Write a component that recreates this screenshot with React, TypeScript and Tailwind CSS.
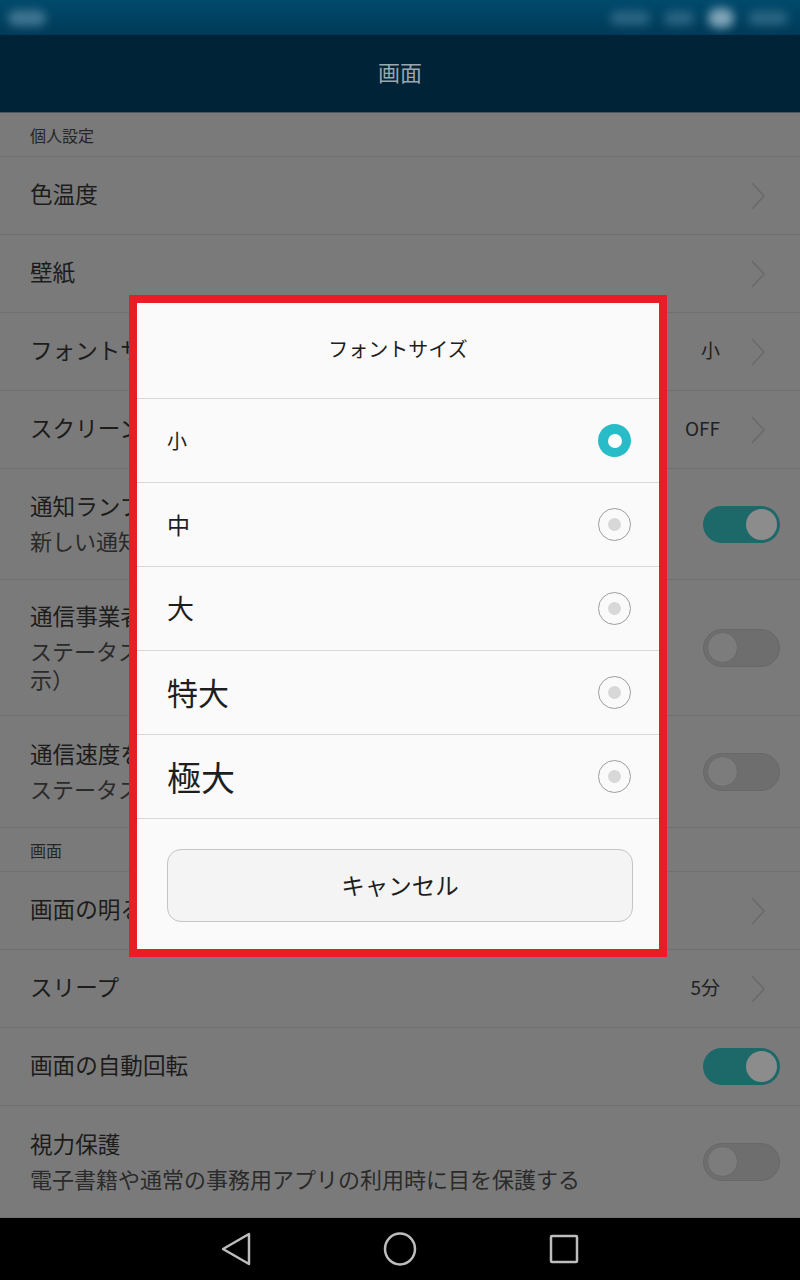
import React from "react";

const FONT = { fontFamily: '"Noto Sans CJK JP", "Noto Sans", sans-serif' };

function Chevron() {
  return (
    <svg width="16" height="28" viewBox="0 0 16 28" className="shrink-0">
      <path d="M2 1 L14 14 L2 27" fill="none" stroke="#6a6a6a" strokeWidth="1.6" />
    </svg>
  );
}

function Toggle({ on }: { on: boolean }) {
  return on ? (
    <div className="w-[77px] h-[37px] rounded-full bg-[#1d6868] flex items-center justify-end px-[3px] shrink-0">
      <div className="w-[31px] h-[31px] rounded-full bg-[#8c8c8c]" />
    </div>
  ) : (
    <div className="w-[77px] h-[38px] rounded-full bg-[#6e6e6e] border border-[#686868] flex items-center justify-start px-[3px] shrink-0">
      <div className="w-[31px] h-[31px] rounded-full bg-[#7c7c7c] border border-[#6a6a6a]" />
    </div>
  );
}

function Row({
  title,
  sub,
  value,
  chevron,
  toggle,
  h,
}: {
  title: string;
  sub?: React.ReactNode;
  value?: string;
  chevron?: boolean;
  toggle?: "on" | "off";
  h: string;
}) {
  return (
    <div className={`flex items-center border-b border-[#6f6f6f] pl-[30px] pr-[20px] ${h}`}>
      <div className="flex-1 min-w-0 pb-[3px]">
        <div className="text-[22.6px] leading-[30px] text-[#1c1c1c]">{title}</div>
        {sub && <div className="mt-[5px] text-[22px] leading-[28px] text-[#2a2a2a]">{sub}</div>}
      </div>
      {value && <div className="text-[19px] text-[#222] mr-[30px] pb-[2px]">{value}</div>}
      {chevron && <div className="mr-[14px]"><Chevron /></div>}
      {toggle && <Toggle on={toggle === "on"} />}
    </div>
  );
}

function Section({ label, h }: { label: string; h: string }) {
  return (
    <div className={`flex items-center border-b border-[#6f6f6f] pl-[30px] ${h}`}>
      <span className="text-[16px] text-[#262626]">{label}</span>
    </div>
  );
}

function Radio({ selected }: { selected: boolean }) {
  return selected ? (
    <div className="w-[33px] h-[33px] rounded-full bg-[#27bcc7] flex items-center justify-center">
      <div className="w-[14px] h-[14px] rounded-full bg-white" />
    </div>
  ) : (
    <div className="w-[33px] h-[33px] rounded-full border-[1.5px] border-[#9d9d9d] flex items-center justify-center">
      <div className="w-[13px] h-[13px] rounded-full bg-[#d8d8d8]" />
    </div>
  );
}

const OPTIONS: { label: string; cls: string; selected: boolean }[] = [
  { label: "小", cls: "text-[20px]", selected: true },
  { label: "中", cls: "text-[23px]", selected: false },
  { label: "大", cls: "text-[27px]", selected: false },
  { label: "特大", cls: "text-[31px]", selected: false },
  { label: "極大", cls: "text-[34px]", selected: false },
];

export default function App() {
  return (
    <div className="relative w-[800px] h-[1280px] overflow-hidden bg-[#7a7a7a] flex flex-col" style={FONT}>
      {/* status bar (blurred) */}
      <div className="h-[35px] bg-gradient-to-b from-[#004a6c] to-[#003a58] flex items-center justify-between px-[8px] shrink-0 overflow-hidden">
        <div className="w-[38px] h-[16px] rounded-full bg-[#3f7591] blur-[5px]" />
        <div className="flex items-center gap-[14px] mr-[4px]">
          <div className="w-[40px] h-[14px] rounded-full bg-[#2a6584] blur-[5px]" />
          <div className="w-[30px] h-[14px] rounded-full bg-[#2a6584] blur-[5px]" />
          <div className="w-[26px] h-[20px] rounded-full bg-[#7fa5b8] blur-[5px]" />
          <div className="w-[40px] h-[14px] rounded-full bg-[#2a6584] blur-[5px]" />
        </div>
      </div>
      {/* header */}
      <div className="h-[78px] bg-[#002338] flex items-center justify-center shrink-0 border-b border-[#4a5760] pb-[5px]">
        <span className="text-[22px] text-[#9aa6b0]">画面</span>
      </div>

      <Section label="個人設定" h="h-[44px]" />
      <Row title="色温度" chevron h="h-[78px]" />
      <Row title="壁紙" chevron h="h-[78px]" />
      <Row title="フォントサイズ" value="小" chevron h="h-[78px]" />
      <Row title="スクリーンセーバー" value="OFF" chevron h="h-[78px]" />
      <Row title="通知ランプ" sub="新しい通知があるとランプが点滅" toggle="on" h="h-[111px]" />
      <Row
        title="通信事業者名を表示"
        sub={
          <>
            ステータスバーに通信事業者名を表示（通信事業者名を表<br />示）
          </>
        }
        toggle="off"
        h="h-[136px]"
      />
      <Row title="通信速度を表示" sub="ステータスバーに通信速度を表示" toggle="off" h="h-[112px]" />
      <Section label="画面" h="h-[44px]" />
      <Row title="画面の明るさ" chevron h="h-[78px]" />
      <Row title="スリープ" value="5分" chevron h="h-[78px]" />
      <Row title="画面の自動回転" toggle="on" h="h-[78px]" />
      <Row title="視力保護" sub="電子書籍や通常の事務用アプリの利用時に目を保護する" toggle="off" h="h-[112px]" />

      <div className="flex-1" />
      {/* nav bar */}
      <div className="h-[62px] bg-black flex items-center justify-center gap-[132px] shrink-0">
        <svg width="32" height="34" viewBox="0 0 32 34">
          <path d="M30 2 L30 32 L4 17 Z" fill="none" stroke="#bdbdbd" strokeWidth="2.5" strokeLinejoin="round" />
        </svg>
        <svg width="34" height="34" viewBox="0 0 34 34">
          <ellipse cx="17" cy="17" rx="15" ry="15.5" fill="none" stroke="#bdbdbd" strokeWidth="2.5" />
        </svg>
        <svg width="32" height="32" viewBox="0 0 32 32">
          <rect x="2" y="3" width="26" height="26" rx="1" fill="none" stroke="#bdbdbd" strokeWidth="2.5" />
        </svg>
      </div>

      {/* dialog */}
      <div className="absolute left-[129px] top-[295px] w-[538px] h-[662px] border-[8px] border-[#e81d25] bg-[#fafafa] flex flex-col">
        <div className="h-[96px] flex items-center justify-center border-b border-[#d8d8d8] pb-[4px]">
          <span className="text-[20px] text-[#1e1e1e]">フォントサイズ</span>
        </div>
        {OPTIONS.map((o) => (
          <div key={o.label} className="h-[84px] flex items-center justify-between pl-[30px] pr-[28px] border-b border-[#d8d8d8]">
            <span className={`${o.cls} text-[#1e1e1e]`}>{o.label}</span>
            <Radio selected={o.selected} />
          </div>
        ))}
        <div className="flex-1 pt-[30px] pl-[30px] pr-[26px]">
          <div className="w-full h-[73px] rounded-[14px] border border-[#c4c4c4] bg-[#f4f4f4] flex items-center justify-center">
            <span className="text-[23.5px] text-[#1e1e1e]">キャンセル</span>
          </div>
        </div>
      </div>
    </div>
  );
}
